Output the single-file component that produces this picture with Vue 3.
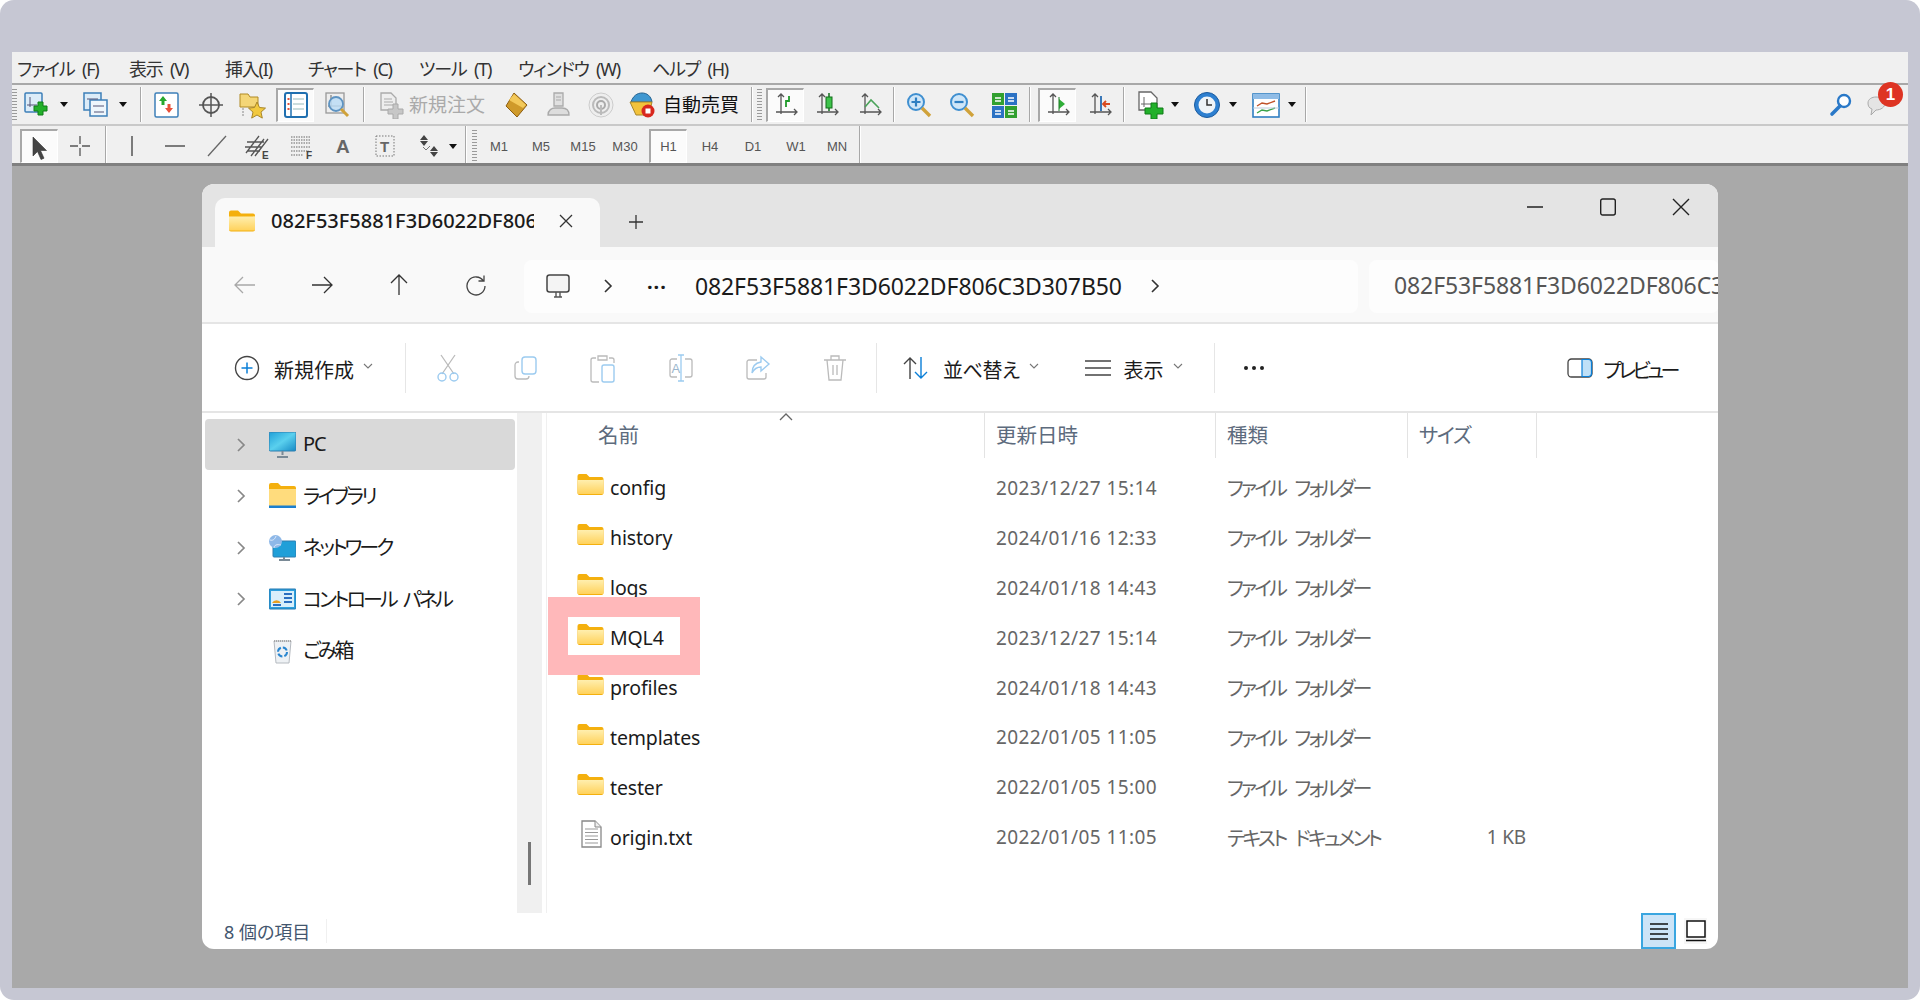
<template>
  <div class="page">
    <div class="frame">
      <!-- terminal menu -->
      <div class="menubar">
        <span v-for="m in menus" :key="m.label" class="menu" :style="{ width: m.w + 'px' }">{{ m.label }}</span>
      </div>
      <div class="toolbar first">
        <div
          v-for="(it, i) in bar1"
          :key="i"
          :class="['tb', it.cls]"
          :style="{ width: it.w + 'px', marginLeft: it.gap + 'px' }"
        >
          <svg v-if="it.svg" width="28" height="28" viewBox="0 0 28 28" v-html="it.svg"></svg>
          <template v-else>{{ it.text }}</template>
          <span v-if="it.badge" class="badge">1</span>
        </div>
      </div>
      <div class="toolbar second">
        <div
          v-for="(it, i) in bar2"
          :key="i"
          :class="['tb', it.cls]"
          :style="{ width: it.w + 'px', marginLeft: it.gap + 'px' }"
        >
          <svg v-if="it.svg" width="28" height="28" viewBox="0 0 28 28" v-html="it.svg"></svg>
          <template v-else>{{ it.text }}</template>
        </div>
      </div>

      <div class="desk">
        <div class="win">
          <!-- tabs -->
          <div class="tabstrip">
            <div class="tab">
              <svg class="tabfolder" width="26" height="22" viewBox="0 0 26 21" v-html="folder"></svg>
              <span class="tabtext">082F53F5881F3D6022DF806C3D307B50</span>
              <svg class="tabx" width="14" height="14" viewBox="0 0 14 14"><path d="M1 1l12 12M13 1L1 13" stroke="#333" stroke-width="1.3" fill="none"/></svg>
            </div>
            <svg class="plus" width="16" height="16" viewBox="0 0 16 16"><path d="M8 1v14M1 8h14" stroke="#333" stroke-width="1.3"/></svg>
            <div class="winbtns">
              <svg width="18" height="18" viewBox="0 0 18 18"><path d="M1 9h16" stroke="#222" stroke-width="1.4"/></svg>
              <svg width="18" height="18" viewBox="0 0 18 18"><rect x="1.7" y="1" width="14.6" height="16" rx="2" stroke="#222" stroke-width="1.4" fill="none"/></svg>
              <svg width="18" height="18" viewBox="0 0 18 18"><path d="M1 1l16 16M17 1L1 17" stroke="#222" stroke-width="1.4"/></svg>
            </div>
          </div>

          <!-- navigation -->
          <div class="navbar">
            <div class="navbtns">
              <svg width="22" height="20" viewBox="0 0 22 20"><path d="M21 10H1M9 2l-8 8 8 8" stroke="#a8a8a8" stroke-width="1.3" fill="none"/></svg>
              <svg width="22" height="20" viewBox="0 0 22 20"><path d="M1 10h20M13 2l8 8-8 8" stroke="#333" stroke-width="1.3" fill="none"/></svg>
              <svg width="22" height="22" viewBox="0 0 22 22"><path d="M11 21V1M3 9l8-8 8 8" stroke="#333" stroke-width="1.3" fill="none"/></svg>
              <svg width="22" height="22" viewBox="0 0 22 22"><path d="M18.5 7A9 9 0 1 0 20 12M19 1.5V7h-5.5" stroke="#444" stroke-width="1.3" fill="none"/></svg>
            </div>
            <div class="crumbs">
              <svg width="26" height="26" viewBox="0 0 26 26"><rect x="2" y="2" width="22" height="17" rx="2.5" stroke="#444" stroke-width="1.5" fill="#f4f4f4"/><path d="M9 24h8M11 19v5M15 19v5" stroke="#555" stroke-width="1.4"/></svg>
              <svg class="crchev" width="10" height="14" viewBox="0 0 10 14"><path d="M2 1l6 6-6 6" stroke="#333" stroke-width="1.6" fill="none"/></svg>
              <span class="crdots">···</span>
              <span class="crtext">082F53F5881F3D6022DF806C3D307B50</span>
              <svg class="crchev2" width="10" height="14" viewBox="0 0 10 14"><path d="M2 1l6 6-6 6" stroke="#333" stroke-width="1.6" fill="none"/></svg>
            </div>
            <div class="searchbox">082F53F5881F3D6022DF806C3D307B50</div>
          </div>

          <!-- command bar -->
          <div class="cmdbar">
            <svg class="cm-new" width="26" height="26" viewBox="0 0 26 26"><circle cx="13" cy="13" r="11.5" stroke="#444" stroke-width="1.4" fill="none"/><path d="M13 7.5v11M7.5 13h11" stroke="#0a7fd8" stroke-width="1.5"/></svg>
            <span class="cm-label newl">新規作成</span>
            <svg class="chev" width="10" height="6" viewBox="0 0 10 6"><path d="M1 1l4 4 4-4" stroke="#777" stroke-width="1.1" fill="none"/></svg>
            <i class="cmsep s1"></i>
            <div class="ghosts">
              <svg width="26" height="28" viewBox="0 0 26 28"><path d="M6 1l13 19M20 1L7 20" stroke="#bbb" stroke-width="1.3" fill="none"/><circle cx="7" cy="23" r="4" stroke="#9ccbf0" stroke-width="1.4" fill="none"/><circle cx="19" cy="23" r="4" stroke="#9ccbf0" stroke-width="1.4" fill="none"/></svg>
              <svg width="26" height="26" viewBox="0 0 26 26"><rect x="9" y="2" width="14" height="17" rx="3" stroke="#9ccbf0" stroke-width="1.4" fill="none"/><path d="M6 7H5a3 3 0 0 0-3 3v11a3 3 0 0 0 3 3h8a3 3 0 0 0 3-3" stroke="#bbb" stroke-width="1.3" fill="none"/></svg>
              <svg width="26" height="30" viewBox="0 0 26 30"><path d="M6 5H3a2 2 0 0 0-2 2v20a2 2 0 0 0 2 2h6M19 5h3a2 2 0 0 1 2 2v3M8 7V3h9v4z" stroke="#bbb" stroke-width="1.3" fill="none"/><rect x="12" y="12" width="12" height="17" rx="2" stroke="#9ccbf0" stroke-width="1.4" fill="none"/></svg>
              <svg width="26" height="30" viewBox="0 0 26 30"><path d="M9 6H4a2 2 0 0 0-2 2v14a2 2 0 0 0 2 2h5M17 6h5a2 2 0 0 1 2 2v14a2 2 0 0 1-2 2h-5" stroke="#bbb" stroke-width="1.3" fill="none"/><path d="M13 2v26M10 2h6M10 28h6" stroke="#9ccbf0" stroke-width="1.3"/><text x="3.5" y="20" font-size="13" fill="#9bb6cc" font-family="Liberation Sans">A</text></svg>
              <svg width="26" height="26" viewBox="0 0 26 26"><path d="M12 5H4a2 2 0 0 0-2 2v15a2 2 0 0 0 2 2h15a2 2 0 0 0 2-2v-4" stroke="#bbb" stroke-width="1.3" fill="none"/><path d="M16 2l8 7-8 7v-4c-4 0-7 2-9 6 0-6 3-10 9-11z" stroke="#9ccbf0" stroke-width="1.4" fill="none"/></svg>
              <svg width="24" height="28" viewBox="0 0 24 28"><path d="M1 6h22M4 6l2 20h12l2-20M8 6V2h8v4M10 11v10M14 11v10" stroke="#bbb" stroke-width="1.3" fill="none"/></svg>
            </div>
            <i class="cmsep s2"></i>
            <svg class="cm-sort" width="26" height="24" viewBox="0 0 26 24"><path d="M7 23V2M1 8l6-6 6 6" stroke="#444" stroke-width="1.4" fill="none"/><path d="M18 1v21M12 16l6 6 6-6" stroke="#0a7fd8" stroke-width="1.4" fill="none"/></svg>
            <span class="cm-label sortl">並べ替え</span>
            <svg class="chev" width="10" height="6" viewBox="0 0 10 6"><path d="M1 1l4 4 4-4" stroke="#777" stroke-width="1.1" fill="none"/></svg>
            <svg class="cm-view" width="26" height="18" viewBox="0 0 26 18"><path d="M0 2h26M0 9h26M0 16h26" stroke="#444" stroke-width="1.3"/></svg>
            <span class="cm-label viewl">表示</span>
            <svg class="chev" width="10" height="6" viewBox="0 0 10 6"><path d="M1 1l4 4 4-4" stroke="#777" stroke-width="1.1" fill="none"/></svg>
            <i class="cmsep s3"></i>
            <span class="cmdots"><b></b><b></b><b></b></span>
            <svg class="cm-prev" width="26" height="20" viewBox="0 0 26 20"><rect x="1" y="1" width="24" height="18" rx="3.5" stroke="#444" stroke-width="1.3" fill="none"/><path d="M15 1.500h6.500a3 3 0 0 1 3 3v11a3 3 0 0 1-3 3H15z" fill="#bfe0f7" stroke="#0a7fd8" stroke-width="1.2"/></svg>
            <span class="cm-label prevl">プレビュー</span>
          </div>

          <!-- tree and file list -->
          <div class="body">
            <div class="tree">
              <div v-for="n in tree" :key="n.label" :class="['node', { on: n.on }]">
                <svg v-if="n.more" class="nchev" width="10" height="16" viewBox="0 0 10 16"><path d="M2 2l6 6-6 6" stroke="#888" stroke-width="1.7" fill="none"/></svg>
                <span v-else class="nchev"></span>
                <svg class="nicon" width="27" height="26" viewBox="0 0 27 26" v-html="n.svg"></svg>
                <span class="nlabel">{{ n.label }}</span>
              </div>
            </div>
            <div class="scroll"><i></i></div>
            <div class="files">
              <svg class="caret" width="14" height="8" viewBox="0 0 14 8"><path d="M1 7l6-6 6 6" stroke="#666" stroke-width="1.3" fill="none"/></svg>
              <div class="cols">
                <div class="col cname">名前</div>
                <div class="col cdate">更新日時</div>
                <div class="col ctype">種類</div>
                <div class="col csize">サイズ</div>
              </div>
              <div class="rows">
                <div v-for="f in files" :key="f.name" class="row">
                  <div class="rname">
                    <svg v-if="f.dir" width="27" height="21" viewBox="0 0 26 21" v-html="folder"></svg>
                    <svg v-else class="txticon" width="27" height="28" viewBox="0 0 27 28"><path d="M5 1h13l6 6v20H5z" fill="#fff" stroke="#888" stroke-width="1.3"/><path d="M18 1v6h6" fill="#eee" stroke="#888" stroke-width="1"/><path d="M8 9h13M8 12.500h13M8 16h13M8 19.500h13M8 23h13" stroke="#999" stroke-width="1.100"/></svg>
                    <span>{{ f.name }}</span>
                  </div>
                  <div class="rdate">{{ f.date }}</div>
                  <div class="rtype">{{ f.type }}</div>
                  <div class="rsize">{{ f.size }}</div>
                </div>
              </div>
              <!-- callout around the MQL4 row -->
              <div class="callout"></div>
            </div>
          </div>

          <div class="status">
            <span class="count">8 個の項目</span>
            <i class="stsep"></i>
            <div class="views">
              <div class="vbtn act">
                <svg width="20" height="18" viewBox="0 0 20 18"><path d="M1 2h18M1 7h18M1 12h18M1 17h18" stroke="#111" stroke-width="1.500"/></svg>
              </div>
              <div class="vbtn">
                <svg width="20" height="22" viewBox="0 0 20 22"><rect x="1" y="1" width="18" height="16" fill="#fff" stroke="#111" stroke-width="1.500"/><path d="M0 20.500h20" stroke="#111" stroke-width="1.500"/></svg>
              </div>
            </div>
          </div>
        </div>
      </div>
    </div>
  </div>
</template>

<script setup>
// ファイラーとMT4ツールバーの図
const folder = `<defs><linearGradient id="fg" x1="0" y1="0" x2="0" y2="1"><stop offset="0" stop-color="#ffefb0"/><stop offset="1" stop-color="#ffd25c"/></linearGradient></defs>
<path d="M0 2a2 2 0 0 1 2-2h7l3 3h12a2 2 0 0 1 2 2v14a2 2 0 0 1-2 2H2a2 2 0 0 1-2-2z" fill="#f4b00e"/>
<path d="M0 6h24a2 2 0 0 1 2 0v13a1 1 0 0 1-1 1H1a1 1 0 0 1-1-1z" fill="url(#fg)"/>`

const plus = (x, y) => `<path d="M${x + 4} ${y}h5v4h4v5h-4v4h-5v-4h-4v-5h4z" fill="#22b02a" stroke="#0f7d16"/>`
const doc = `<rect x="2" y="2" width="17" height="19" rx="1" fill="#dcecf8" stroke="#3c7fb8" stroke-width="1.500"/>`
const axes = `<path d="M9 3v20M4 21h20M6 6l3-3 3 3M22 18l3 3-3 3" stroke="#555" stroke-width="1.300" fill="none"/>`
const lens = (c) => `<circle cx="11" cy="11" r="8" fill="#cfe6f8" stroke="#3f8fd0" stroke-width="2"/><path d="M17 17l8 8" stroke="#d0a23a" stroke-width="3.400"/>${c}`

const icons = {
  newchart: doc + `<path d="M7 6v10M4 14h10" stroke="#557" stroke-width="1"/>` + plus(11, 11),
  profiles: `<rect x="2" y="2" width="17" height="17" fill="#dcecf8" stroke="#3c7fb8" stroke-width="1.500"/><rect x="8" y="9" width="17" height="16" fill="#eef6fc" stroke="#3c7fb8" stroke-width="1.500"/><path d="M5 8h11M11 15h11M12 21h10" stroke="#557" stroke-width="1"/>`,
  market: `<rect x="2" y="2" width="23" height="24" rx="1.500" fill="#fff" stroke="#3c7fb8" stroke-width="1.500"/><path d="M10 5l4 5h-2.500v4h-3v-4H6z" fill="#27a82f"/><path d="M16 22l-4-5h2.500v-4h3v4H20z" fill="#e8503a"/>`,
  cross: `<circle cx="14" cy="14" r="8" stroke="#555" stroke-width="1.800" fill="none"/><path d="M14 2v24M2 14h24" stroke="#555" stroke-width="1.500"/>`,
  star: `<path d="M2 3h8l2 3h8v10H2z" fill="#f4d677" stroke="#b08a25"/><path d="M19 11l2.500 5.500 6 .6-4.500 4 1.300 6-5.300-3.100-5.300 3.100 1.300-6-4.500-4 6-.6z" fill="#f2c93f" stroke="#a8862a"/><path d="M5 17v9" stroke="#888" stroke-dasharray="2 1"/>`,
  nav: `<rect x="3" y="2" width="22" height="24" rx="2" fill="#fff" stroke="#1f6fb0" stroke-width="2"/><path d="M9 3v22" stroke="#1f6fb0" stroke-width="1.500"/><path d="M5.500 8h2M5.500 13h2M5.500 18h2" stroke="#e0503a" stroke-width="2"/><path d="M11 8h11M11 13h11M11 18h11" stroke="#9bb" />`,
  term: `<rect x="3" y="2" width="18" height="20" fill="#eee" stroke="#999" stroke-width="1.300"/><path d="M8 4v14M5 15h13" stroke="#666"/><circle cx="13" cy="13" r="7" fill="#bcdcf4" fill-opacity=".85" stroke="#5d93c2" stroke-width="1.800"/><path d="M18 18l7 7" stroke="#d0a23a" stroke-width="3"/>`,
  order: `<path d="M4 2h10l5 5v12H4z" fill="#eee" stroke="#aaa" stroke-width="1.300"/><path d="M7 8h8M7 11h9M7 14h9" stroke="#aaa"/>` + `<path d="M16 13h5v5h5v5h-5v5h-5v-5h-5v-5h5z" fill="#c7c7c7" stroke="#aaa"/>`,
  gold: `<path d="M11 2l13 12-10 12L3 15z" fill="#cf9a2a" stroke="#8c5d12"/><path d="M11 3l12 11-3 3L6 9z" fill="#f3c95a"/>`,
  person: `<path d="M9 2h9v13H9z" fill="#e0e0e0" stroke="#aaa" stroke-width="1.300"/><path d="M11 6h5M11 9h5" stroke="#aaa"/><path d="M3 24c0-5 4-7 7-7h7c4 0 7 2 7 7z" fill="#ddd" stroke="#aaa" stroke-width="1.300"/>`,
  signal: `<circle cx="14" cy="14" r="12" fill="#eee" stroke="#ccc"/><circle cx="14" cy="14" r="8" fill="none" stroke="#bbb" stroke-width="2"/><circle cx="14" cy="14" r="4" fill="none" stroke="#aaa" stroke-width="2"/><path d="M14 14v10" stroke="#bbb" stroke-width="2"/>`,
  robot: `<path d="M3 11c2-6 6-9 11-9 5 0 9 3 10 9z" fill="#3f97d0" stroke="#23618f"/><path d="M2 11h22l-3 13H8z" fill="#f2c23b" stroke="#a8862a"/><circle cx="20" cy="20" r="6.500" fill="#d8281e"/><rect x="17.500" y="17.500" width="5" height="5" fill="#fff"/>`,
  bar: axes + `<path d="M17 5v5h-3v6" stroke="#1f9a2a" stroke-width="1.800" fill="none"/>`,
  candle: axes + `<rect x="13" y="6" width="6" height="11" fill="#3dc24a" stroke="#126d1b"/><path d="M16 2v4M16 17v3" stroke="#126d1b" stroke-width="1.500"/>`,
  line: axes + `<path d="M9 16l6-7 8 8" stroke="#4aa35a" stroke-width="1.600" fill="none"/>`,
  zin: lens(`<path d="M11 6.500v9M6.500 11h9" stroke="#2f7fc2" stroke-width="2.200"/>`),
  zout: lens(`<path d="M6.500 11h9" stroke="#2f7fc2" stroke-width="2.200"/>`),
  tile: `<rect x="2" y="2" width="12" height="12" fill="#31a02f"/><rect x="15" y="2" width="12" height="12" fill="#2b72c4"/><rect x="2" y="15" width="12" height="12" fill="#2b72c4"/><rect x="15" y="15" width="12" height="12" fill="#31a02f"/><path d="M5 7h6M5 10h6M18 20h6M18 23h6M18 7h6M18 10h6M5 20h6M5 23h6" stroke="#fff" stroke-width="1.400"/>`,
  shift: axes + `<path d="M15 8l6 5-6 5z" fill="#2fae38"/><path d="M15 6v14" stroke="#1f7a26"/>`,
  auto: axes + `<path d="M15 5v15" stroke="#3a78b8" stroke-width="2"/><path d="M24 13h-6M20 10l-3 3 3 3" stroke="#d84a20" stroke-width="1.800" fill="none"/>`,
  addind: `<path d="M3 1h12l6 6v12H3z" fill="#fff" stroke="#666" stroke-width="1.300"/><path d="M8 6v10M5 13h10" stroke="#666"/>` + `<path d="M15 12h6v5h6v6h-6v5h-6v-5H9v-6h6z" fill="#22b02a" stroke="#0f7d16"/>`,
  clock: `<circle cx="14" cy="14" r="12.500" fill="#2d7fd0" stroke="#1a5a9e"/><circle cx="14" cy="14" r="8.500" fill="#eef3f8"/><path d="M14 8v6h5" stroke="#333" stroke-width="1.500" fill="none"/>`,
  tpl: `<rect x="1" y="3" width="26" height="23" fill="#fff" stroke="#2f7fc2" stroke-width="1.600"/><rect x="1" y="3" width="26" height="5" fill="#8fbce6"/><path d="M5 15l5-3 5 1 8-3" stroke="#c0532a" stroke-width="1.400" fill="none"/><path d="M5 22l5-3 5 1 8-3" stroke="#3aa34a" stroke-width="1.400" fill="none"/><path d="M1 17h26" stroke="#bcd"/>`,
  search: `<circle cx="17" cy="10" r="6" fill="#fff" stroke="#2a79c8" stroke-width="2.400"/><path d="M13 15l-8 8" stroke="#2a79c8" stroke-width="3.600" stroke-linecap="round"/>`,
  chat: `<path d="M4 12c0-4 4-6 8-6s9 2 9 6-4 7-9 7l-5 5 1-6c-3-1-4-3-4-6z" fill="#e4e4e4" stroke="#aaa"/>`,
  arrow: `<path d="M7 4v19l4.500-4.500 3.500 8 3-1.300-3.500-7.700h6z" fill="#444" stroke="#333" stroke-width=".6"/>`,
  thin: `<path d="M14 4v8M14 16v8M4 14h8M16 14h8" stroke="#555" stroke-width="1.300"/>`,
  vline: `<path d="M14 4v20" stroke="#555" stroke-width="1.500"/>`,
  hline: `<path d="M4 14h20" stroke="#555" stroke-width="1.500"/>`,
  diag: `<path d="M5 24L23 4" stroke="#666" stroke-width="1.300"/>`,
  equi: `<path d="M3 21L16 4M8 24L21 7M12 24L25 7M2 15h17M4 10h17M5 19h12" stroke="#555" stroke-width="1.300"/><text x="19" y="27" font-size="10" font-weight="700" fill="#444" font-family="Liberation Sans">E</text>`,
  fibo: `<path d="M4 5h20M4 8h20M4 11h20M4 15h20M4 19h18M4 23h12" stroke="#666" stroke-dasharray="1.500 1" stroke-width="1.200"/><text x="19" y="27" font-size="10" font-weight="700" fill="#444" font-family="Liberation Sans">F</text>`,
  txt: `<text x="7" y="21" font-size="19" font-weight="700" fill="#666" font-family="Liberation Sans">A</text>`,
  label: `<rect x="5" y="4" width="18" height="20" fill="none" stroke="#777" stroke-dasharray="1.500 1.500"/><text x="9" y="20" font-size="15" font-weight="700" fill="#666" font-family="Liberation Sans">T</text>`,
  marks: `<path d="M10 3l4 5H6zM6 9h8l-4 5z" fill="#444"/><path d="M20 14l4 5h-8zM16 20h8l-4 5z" fill="#444"/><path d="M9 15l3 3 4-4" stroke="#777" fill="none"/>`,
}

// center x -> left margin, so each bar is just a row of boxes
function place(list, start) {
  let end = start
  return list.map((it) => {
    const w = it.w || 26
    const gap = it.x - w / 2 - end
    end = it.x + w / 2
    return { ...it, w, gap, svg: it.icon ? icons[it.icon] : null }
  })
}

const sep = (x) => ({ x, w: 2, cls: 'sep' })
const grip = (x) => ({ x, w: 5, cls: 'grip' })
const drop = (x) => ({ x, w: 9, cls: 'drop' })

const bar1 = place([
  grip(14),
  { x: 36.5, icon: 'newchart' }, drop(64),
  { x: 96, icon: 'profiles' }, drop(123), sep(141),
  { x: 167, icon: 'market' }, { x: 211, icon: 'cross' }, { x: 252, icon: 'star' },
  { x: 295, w: 38, icon: 'nav', cls: 'active' }, { x: 337, icon: 'term' }, sep(364),
  { x: 391, icon: 'order' }, { x: 447, w: 80, text: '新規注文', cls: 'word off' },
  { x: 517, icon: 'gold' }, { x: 559, icon: 'person' }, { x: 601, icon: 'signal' }, { x: 642, icon: 'robot' },
  { x: 701, w: 76, text: '自動売買', cls: 'word' }, sep(752), grip(759),
  { x: 785, w: 38, icon: 'bar', cls: 'active' }, { x: 827, icon: 'candle' }, { x: 870, icon: 'line' }, sep(894),
  { x: 919, icon: 'zin' }, { x: 962, icon: 'zout' }, { x: 1004, icon: 'tile' }, sep(1030),
  { x: 1057, w: 38, icon: 'shift', cls: 'active' }, { x: 1100, icon: 'auto' }, sep(1124),
  { x: 1150, icon: 'addind' }, drop(1175),
  { x: 1207, icon: 'clock' }, drop(1233),
  { x: 1266, icon: 'tpl' }, drop(1292), sep(1306),
  { x: 1841, icon: 'search' }, { x: 1878, icon: 'chat', badge: true },
], 12)

const tf = (x, text) => ({ x, w: 36, text, cls: 'tf' })
const bar2 = place([
  { x: 39, w: 38, icon: 'arrow', cls: 'active' }, { x: 80, icon: 'thin' }, sep(106),
  { x: 132, icon: 'vline' }, { x: 175, icon: 'hline' }, { x: 217, icon: 'diag' },
  { x: 257, icon: 'equi' }, { x: 301, icon: 'fibo' }, { x: 343, icon: 'txt' }, { x: 385, icon: 'label' },
  { x: 428, icon: 'marks' }, drop(453), sep(466), grip(474),
  tf(499, 'M1'), tf(541, 'M5'), tf(583, 'M15'), tf(625, 'M30'),
  { x: 668, w: 38, text: 'H1', cls: 'tf active' },
  tf(710, 'H4'), tf(753, 'D1'), tf(796, 'W1'), tf(837, 'MN'), sep(860),
], 12)

const menus = [
  { label: 'ファイル (F)', w: 112 },
  { label: '表示 (V)', w: 96 },
  { label: '挿入(I)', w: 83 },
  { label: 'チャート (C)', w: 111 },
  { label: 'ツール (T)', w: 99 },
  { label: 'ウィンドウ (W)', w: 134 },
  { label: 'ヘルプ (H)', w: 100 },
]

const tree = [
  { label: 'PC', more: true, on: true, svg: `<defs><linearGradient id="pcg" x1="0" y1="0" x2="1" y2="1"><stop offset="0" stop-color="#1f9fd8"/><stop offset=".5" stop-color="#5ad0ee"/><stop offset="1" stop-color="#1589c4"/></linearGradient></defs><rect x="0" y="0" width="27" height="19" rx="1.500" fill="url(#pcg)" stroke="#2e7fb0"/><path d="M13.500 19v4M8 25h11" stroke="#7a8a96" stroke-width="2"/>` },
  { label: 'ライブラリ', more: true, svg: `<path d="M0 2a2 2 0 0 1 2-2h7l3 3h13a2 2 0 0 1 2 2v19H0z" fill="#f4b00e"/><path d="M0 6h27v17H0z" fill="#ffdc7d"/><path d="M0 22.500h27v2.500H0z" fill="#1b7fd0"/>` },
  { label: 'ネットワーク', more: true, svg: `<rect x="4" y="6" width="23" height="16" rx="1" fill="#1f9fd8" stroke="#2e7fb0"/><path d="M15 22v3M10 25h11" stroke="#7a8a96" stroke-width="2"/><circle cx="6.500" cy="6.500" r="6.500" fill="#8eb8e8"/><path d="M1 5c3 1 5-1 6-4M5 13c0-3 3-4 7-3" stroke="#dce9fa" fill="none"/>` },
  { label: 'コントロール パネル', more: true, svg: `<rect x="0" y="3" width="27" height="20" rx="1" fill="#2d9fdd" stroke="#2379b0"/><rect x="2" y="5" width="23" height="16" fill="#d8effb"/><path d="M3 17a5 5 0 0 1 9 0z" fill="#e8a020"/><path d="M4 19h8" stroke="#2a6fc0" stroke-width="2"/><path d="M15 8h8M15 12h8M15 16h8" stroke="#2a6fc0" stroke-width="1.800"/>` },
  { label: 'ごみ箱', more: false, svg: `<path d="M5 3h17l-2 22H7z" fill="#eef1f4" stroke="#b5bac0"/><path d="M5 3h17" stroke="#999" stroke-width="1.500" stroke-dasharray="1 1"/><circle cx="13.500" cy="14" r="4.500" fill="none" stroke="#2a86d0" stroke-width="2" stroke-dasharray="5 2"/>` },
]

const fd = 'ファイル フォルダー'
const files = [
  { name: 'config', date: '2023/12/27 15:14', type: fd, dir: true },
  { name: 'history', date: '2024/01/16 12:33', type: fd, dir: true },
  { name: 'logs', date: '2024/01/18 14:43', type: fd, dir: true },
  { name: 'MQL4', date: '2023/12/27 15:14', type: fd, dir: true },
  { name: 'profiles', date: '2024/01/18 14:43', type: fd, dir: true },
  { name: 'templates', date: '2022/01/05 11:05', type: fd, dir: true },
  { name: 'tester', date: '2022/01/05 15:00', type: fd, dir: true },
  { name: 'origin.txt', date: '2022/01/05 11:05', type: 'テキスト ドキュメント', size: '1 KB', dir: false },
]
</script>

<style>
html,
body {
  background: #fff;
  margin: 0;
}
</style>

<style scoped>
.page {
  width: 1920px;
  height: 1000px;
  box-sizing: border-box;
  padding: 52px 12px 12px;
  background: #c6c7d3;
  border-radius: 14px;
  overflow: hidden;
  font-family: "Noto Sans", "Noto Sans CJK JP", sans-serif;
  font-feature-settings: "palt";
  color: #1b1b1b;
}
.frame {
  height: 936px;
  display: flex;
  flex-direction: column;
  background: #f0f0f0;
}
.menubar {
  height: 31px;
  flex: none;
  display: flex;
  align-items: center;
  padding-left: 5px;
  border-bottom: 2px solid #a8a8a8;
  font-size: 18px;
  letter-spacing: -1.2px;
  word-spacing: 4px;
  color: #333;
}
.menu {
  white-space: nowrap;
}
.toolbar {
  flex: none;
  display: flex;
  align-items: center;
  white-space: nowrap;
  border-bottom: 2px solid #c9c9c9;
}
.first {
  height: 39px;
}
.second {
  height: 40px;
  box-sizing: border-box;
  padding-top: 3px;
  border-bottom: 3px solid #808080;
}
.tb {
  position: relative;
  flex: none;
  height: 28px;
  display: flex;
  align-items: center;
  justify-content: center;
}
.tb svg {
  flex: none;
}
.tb.sep {
  align-self: stretch;
  height: auto;
  margin-top: 2px;
  margin-bottom: 2px;
  background: linear-gradient(90deg, #a8a8a8 50%, #fff 50%);
}
.second .tb.sep {
  margin-top: -3px;
  margin-bottom: 0;
}
.tb.grip {
  height: 32px;
  background: repeating-linear-gradient(180deg, #9a9a9a 0 1px, transparent 1px 3px);
}
.tb.drop::after {
  content: "";
  border-left: 4.5px solid transparent;
  border-right: 4.5px solid transparent;
  border-top: 5px solid #111;
}
.tb.active {
  height: 34px;
  box-sizing: border-box;
  background: #fbfbfb;
  border: 1px solid #fff;
  border-top: 2px solid #a8a8a8;
  border-left: 2px solid #a8a8a8;
}
.tb.word {
  font-size: 19px;
  color: #111;
  padding-bottom: 2px;
}
.tb.off {
  color: #aaa;
}
.tb.tf {
  font-family: "Liberation Sans", sans-serif;
  font-size: 13px;
  color: #555;
}
.badge {
  position: absolute;
  left: 13px;
  top: -9px;
  width: 25px;
  height: 25px;
  border-radius: 50%;
  background: #de3423;
  color: #fff;
  font: 700 17px/25px "Liberation Sans", sans-serif;
  text-align: center;
}

.desk {
  flex: 1;
  min-height: 0;
  padding: 18px 0 40px 190px;
  background: #a9a9a9;
}
.win {
  width: 1516px;
  height: 765px;
  display: flex;
  flex-direction: column;
  background: #fff;
  border-radius: 12px;
  overflow: hidden;
}

.tabstrip {
  flex: none;
  height: 63px;
  display: flex;
  align-items: flex-end;
  padding-left: 13px;
  background: #e4e4e4;
}
.tab {
  width: 385px;
  height: 49px;
  box-sizing: border-box;
  display: flex;
  align-items: center;
  padding: 0 0 4px 14px;
  background: #f9f9f9;
  border-radius: 10px 10px 0 0;
}
.tabfolder {
  flex: none;
}
.tabtext {
  width: 263px;
  margin-left: 16px;
  overflow: hidden;
  white-space: nowrap;
  font-size: 20px;
  font-weight: 500;
}
.tabx {
  margin-left: 25px;
}
.plus {
  margin: 0 0 17px 28px;
}
.winbtns {
  display: flex;
  gap: 55px;
  margin: 0 28px 31px auto;
}

.navbar {
  flex: none;
  height: 77px;
  box-sizing: border-box;
  display: flex;
  align-items: center;
  padding: 3px 0 0 32px;
  background: #f9f9f9;
  border-bottom: 2px solid #e5e5e5;
}
.navbtns {
  width: 290px;
  flex: none;
  display: flex;
  align-items: center;
  gap: 55px;
  margin-top: -3px;
}
.crumbs {
  width: 834px;
  height: 53px;
  flex: none;
  display: flex;
  align-items: center;
  padding-left: 21px;
  box-sizing: border-box;
  background: #fdfdfd;
  border-radius: 8px;
}
.crchev {
  margin-left: 32px;
}
.crdots {
  margin-left: 34px;
  font-weight: 700;
  font-size: 20px;
  letter-spacing: 1px;
}
.crtext {
  margin-left: 28px;
  font-size: 23px;
  letter-spacing: -0.1px;
  white-space: nowrap;
}
.crchev2 {
  margin-left: 28px;
}
.searchbox {
  flex: none;
  width: 350px;
  height: 53px;
  margin-left: 11px;
  padding-left: 25px;
  box-sizing: border-box;
  line-height: 51px;
  font-size: 23px;
  letter-spacing: -0.1px;
  color: #555;
  white-space: nowrap;
  background: #fdfdfd;
  border-radius: 8px;
  overflow: hidden;
}

.cmdbar {
  flex: none;
  height: 89px;
  box-sizing: border-box;
  display: flex;
  align-items: center;
  padding-left: 32px;
  border-bottom: 2px solid #e5e5e5;
}
.cm-label {
  font-size: 20px;
  white-space: nowrap;
  margin-top: 3px;
}
.newl {
  margin-left: 14px;
}
.chev {
  margin-left: 9px;
  margin-bottom: 4px;
  flex: none;
}
.cmsep {
  width: 1px;
  height: 50px;
  background: #e6e6e6;
  flex: none;
}
.s1 {
  margin-left: 32px;
}
.ghosts {
  width: 470px;
  flex: none;
  display: flex;
  align-items: center;
  justify-content: space-between;
  padding: 0 29px;
  box-sizing: border-box;
}
.s2 {
  margin-left: 0;
}
.cm-sort {
  margin-left: 26px;
  flex: none;
}
.sortl {
  margin-left: 14px;
  letter-spacing: -0.5px;
}
.cm-view {
  margin-left: 46px;
  flex: none;
}
.viewl {
  margin-left: 13px;
}
.s3 {
  margin-left: 31px;
}
.cmdots {
  margin-left: 29px;
  display: flex;
  gap: 4px;
}
.cmdots b {
  width: 4px;
  height: 4px;
  background: #222;
  border-radius: 50%;
}
.cm-prev {
  margin-left: 303px;
  flex: none;
}
.prevl {
  margin-left: 11px;
  letter-spacing: -3.5px;
}

.body {
  flex: 1;
  min-height: 0;
  display: flex;
}
.tree {
  width: 315px;
  flex: none;
  box-sizing: border-box;
  padding: 6px 2px 0 3px;
  display: flex;
  flex-direction: column;
  gap: 0.5px;
}
.node {
  height: 51px;
  flex: none;
  display: flex;
  align-items: center;
  border-radius: 4px;
}
.node.on {
  background: #d9d9d9;
}
.nchev {
  width: 10px;
  margin-left: 31px;
  flex: none;
}
.nicon {
  margin-left: 23px;
  flex: none;
}
.nlabel {
  margin-left: 7px;
  margin-top: -2px;
  font-size: 20px;
  letter-spacing: -2.9px;
  word-spacing: 5px;
  white-space: nowrap;
}
.node.on .nlabel {
  letter-spacing: -1px;
}
.scroll {
  position: relative;
  width: 25px;
  flex: none;
  margin-right: 4px;
  background: #f0f0f0;
}
.scroll i {
  position: absolute;
  left: 11px;
  top: 429px;
  width: 3px;
  height: 43px;
  background: #767676;
}
.files {
  position: relative;
  flex: 1;
  border-left: 1px solid #f0f0f0;
}
.caret {
  position: absolute;
  left: 232px;
  top: 0;
}
.cols {
  display: grid;
  grid-template-columns: 438px 231px 192px 129px;
  height: 43px;
  font-size: 20.500px;
  color: #5d6b7d;
}
.col {
  border-right: 1px solid #e3e3e3;
  line-height: 45px;
  padding-left: 11px;
}
.cname {
  padding-left: 51px;
}
.csize {
  letter-spacing: -1.5px;
}
.rows {
  padding-top: 7px;
}
.row {
  display: grid;
  grid-template-columns: 438px 231px 192px 129px;
  height: 49.900px;
  align-items: center;
  font-size: 19.500px;
  letter-spacing: -0.15px;
  white-space: nowrap;
}
.rname {
  display: flex;
  align-items: center;
  gap: 6px;
  padding-left: 30px;
  height: 100%;
}
.rname svg {
  flex: none;
  margin-top: -6px;
}
.rdate {
  padding-left: 11px;
  color: #666;
  font-size: 19px;
  letter-spacing: 0.4px;
}
.rtype {
  padding-left: 11px;
  color: #666;
  font-size: 20px;
  letter-spacing: -2.800px;
  word-spacing: 7px;
}
.rsize {
  padding-right: 11px;
  text-align: right;
  color: #666;
  font-size: 19px;
}
.callout {
  position: absolute;
  left: 1px;
  top: 184px;
  width: 152px;
  height: 78px;
  box-sizing: border-box;
  border: 20px solid #ffb8ba;
}

.status {
  flex: none;
  height: 36px;
  display: flex;
  align-items: center;
  padding: 0 0 1px 22px;
  box-sizing: border-box;
  font-size: 18px;
  color: #44566e;
}
.count {
  white-space: nowrap;
}
.stsep {
  width: 1px;
  height: 24px;
  margin-left: 16px;
  background: #f0f0f0;
}
.views {
  margin-left: auto;
  margin-right: 11px;
  display: flex;
  align-items: center;
  gap: 8px;
}
.vbtn {
  width: 23px;
  height: 26px;
  display: flex;
  align-items: center;
  justify-content: center;
  background: #f6f6f6;
}
.vbtn.act {
  width: 35px;
  height: 36px;
  box-sizing: border-box;
  background: #cce4f7;
  border: 2px solid #3aa6e0;
}
</style>
